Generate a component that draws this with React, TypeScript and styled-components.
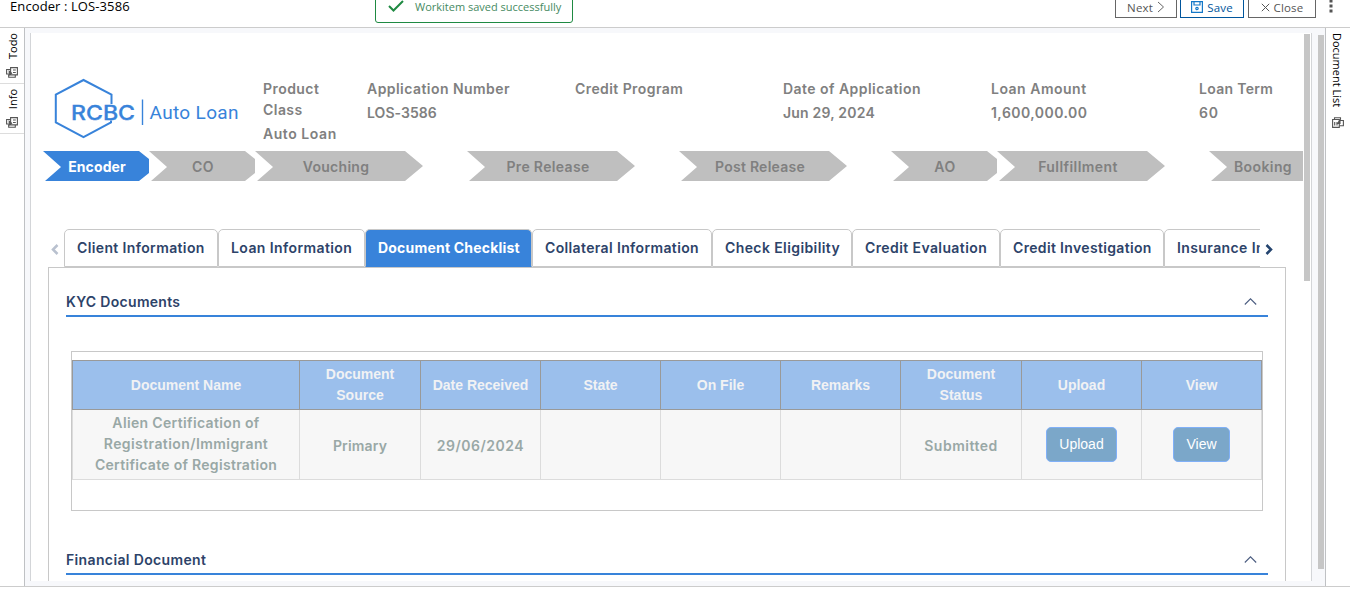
import React from "react";
import styled, { createGlobalStyle } from "styled-components";

const gotham = `Inter, "Open Sans", sans-serif`;
const arial = `"Liberation Sans", Arial, sans-serif`;

const Global = createGlobalStyle`
  * { box-sizing: border-box; }
  html, body { margin: 0; padding: 0; background: #fff; overflow: hidden; }
  body { font-family: "Open Sans", sans-serif; font-size: 13px; color: #000; }
`;

const Shell = styled.div`
  width: 1350px;
  height: 602px;
  display: flex;
  flex-direction: column;
  overflow: hidden;
`;
const TopBar = styled.header`
  position: relative;
  flex: none;
  height: 28px;
  border-bottom: 1px solid #ccc;
  display: flex;
  justify-content: space-between;
  align-items: flex-start;
  padding: 0 16px 0 10px;
`;
const Title = styled.div`
  line-height: 13px;
  font-size: 13px;
  letter-spacing: 0.1px;
`;
const Toast = styled.div`
  position: absolute;
  left: 375px;
  top: -12px;
  width: 198px;
  height: 35px;
  border: 1px solid #1f8a42;
  border-radius: 3px;
  display: flex;
  align-items: center;
  gap: 11px;
  padding: 1px 0 0 12px;
  color: #468a62;
  font-size: 11px;
  white-space: nowrap;
`;
const Actions = styled.div`
  display: flex;
  height: 18px;
  margin-top: -6px;
`;
const ActionButton = styled.button<{ $w: number; $gap: number; $primary?: boolean }>`
  width: ${(p) => p.$w}px;
  height: 24px;
  margin-right: ${(p) => p.$gap}px;
  padding: 2px 0 0;
  display: flex;
  align-items: center;
  justify-content: center;
  gap: 4px;
  background: #fff;
  border: 1px solid ${(p) => (p.$primary ? "#00559c" : "#666")};
  color: ${(p) => (p.$primary ? "#00559c" : "#555")};
  font: 11.5px "Open Sans", sans-serif;
  letter-spacing: 0.15px;
  white-space: nowrap;
`;
const Middle = styled.div`
  flex: none;
  height: 559px;
  display: flex;
  border-bottom: 1px solid #ccc;
`;
const Rail = styled.nav<{ $right?: boolean }>`
  flex: none;
  width: 25px;
  background: #fff;
  border-${(p) => (p.$right ? "left" : "right")}: 1px solid #bfc1c4;
`;
const RailItem = styled.div<{ $h: number; $right?: boolean }>`
  height: ${(p) => p.$h}px;
  border-bottom: ${(p) => (p.$right ? 0 : 1)}px solid #ddd;
  display: flex;
  flex-direction: column;
  align-items: center;
  justify-content: space-between;
  padding: 5px 0 5px;
`;
const RailText = styled.span<{ $up?: boolean }>`
  writing-mode: vertical-rl;
  transform: ${(p) => (p.$up ? "rotate(180deg)" : "none")};
  margin: ${(p) => (p.$up ? "0 0 0 1px" : "0 2px 0 0")};
  font-size: 11px;
  line-height: 16px;
  white-space: nowrap;
`;
const Canvas = styled.main`
  flex: 1;
  min-width: 0;
  background: #f7f8fb;
  display: flex;
  padding: 5px 0 5px 5px;
`;
const Panel = styled.section`
  width: 1282px;
  height: 548px;
  background: #fff;
  border: 1px solid #d3d5d8;
  border-width: 0 1px;
  overflow: hidden;
  display: flex;
`;
const Content = styled.div`
  width: 1272px;
  overflow: hidden;
`;
const Thumb = styled.div<{ $h: number; $top: number; $left: number }>`
  flex: none;
  width: 6px;
  height: ${(p) => p.$h}px;
  margin: ${(p) => p.$top}px 0 0 ${(p) => p.$left}px;
  background: #c6c6c6;
`;

const Summary = styled.div`
  display: flex;
  height: 118px;
  padding: 45px 0 0 23px;
`;
const LogoBox = styled.div`
  width: 209px;
  flex: none;
`;
const Field = styled.div<{ $w: number }>`
  flex: none;
  width: ${(p) => p.$w}px;
  font: 600 14px/21px ${gotham};
  color: #808080;
`;
const FieldLabel = styled.div<{ $ls: number; $narrow?: boolean }>`
  letter-spacing: ${(p) => p.$ls}px;
  width: ${(p) => (p.$narrow ? "60px" : "auto")};
  margin-bottom: 3px;
`;
const FieldValue = styled.div<{ $ls: number }>`
  letter-spacing: ${(p) => p.$ls}px;
`;

const Steps = styled.div`
  display: flex;
  padding-left: 12px;
  height: 78px;
`;
const StepSlot = styled.div<{ $w: number }>`
  flex: none;
  width: ${(p) => p.$w}px;
`;
const Step = styled.div<{ $long?: boolean; $active?: boolean; $ls: number }>`
  height: 30px;
  width: ${(p) => (p.$long ? 168 : 106)}px;
  padding: 1px ${(p) => (p.$long ? 6 : 0)}px 0 ${(p) => (p.$long ? 0 : 2)}px;
  clip-path: ${(p) =>
    p.$long
      ? "polygon(0 0, 150px 0, 168px 15px, 150px 30px, 2px 30px, 18px 16px)"
      : "polygon(0 0, 96px 0, 106px 8px, 106px 22px, 96px 30px, 2px 30px, 18px 16px)"};
  background: ${(p) => (p.$active ? "#3883da" : "#bfbfbf")};
  color: ${(p) => (p.$active ? "#fff" : "#808080")};
  font: ${(p) => (p.$active ? 700 : 600)} 14px/30px ${gotham};
  letter-spacing: ${(p) => p.$ls}px;
  text-align: center;
`;

const TabRow = styled.div`
  display: flex;
  height: 38px;
  padding-left: 20px;
`;
const Arrow = styled.div<{ $w: number; $pad?: number }>`
  width: ${(p) => p.$w}px;
  padding: 15px 0 0 ${(p) => p.$pad ?? 0}px;
  flex: none;
  line-height: 0;
`;
const TabStrip = styled.div`
  width: 1196px;
  overflow: hidden;
  display: flex;
`;
const Tab = styled.div<{ $w: number; $active?: boolean; $ls: number }>`
  flex: none;
  width: ${(p) => p.$w}px;
  height: 38px;
  border: 1px solid #c8c8c8;
  border-bottom-color: ${(p) => (p.$active ? "#3883da" : "#c8c8c8")};
  border-radius: 5px 5px 0 0;
  background: ${(p) => (p.$active ? "#3883da" : "#fff")};
  color: ${(p) => (p.$active ? "#fff" : "#2d4369")};
  font: ${(p) => (p.$active ? 700 : 600)} 14px/36px ${gotham};
  letter-spacing: ${(p) => p.$ls}px;
  padding-left: 12px;
  white-space: nowrap;
`;
const TabBody = styled.div`
  margin-left: 17px;
  width: 1238px;
  height: 400px;
  border: 1px solid #c8c8c8;
  padding: 19px 17px 0;
`;
const SectionHead = styled.div<{ $ls: number }>`
  height: 30px;
  border-bottom: 2px solid #3883da;
  display: flex;
  justify-content: space-between;
  padding: 0 11px 0 0;
  font: 600 14px/30px ${gotham};
  color: #2d4369;
  letter-spacing: ${(p) => p.$ls}px;
  svg { margin-top: 11px; }
`;
const TableBox = styled.div`
  margin: 34px 5px 34px;
  height: 160px;
  border: 1px solid #c8c8c8;
  padding-top: 8px;
`;
const Row = styled.div<{ $head?: boolean }>`
  display: grid;
  grid-template-columns: 228px 121px 120px 120px 120px 120px 121px 120px 120px;
  height: ${(p) => (p.$head ? 50 : 70)}px;
  background: ${(p) => (p.$head ? "#9bbfec" : "#f7f7f7")};
  border: 0 solid ${(p) => (p.$head ? "#999" : "#dcdcdc")};
  border-width: ${(p) => (p.$head ? 1 : 0)}px 0 1px;
`;
const HeadCell = styled.div`
  display: flex;
  align-items: center;
  justify-content: center;
  text-align: center;
  padding: 0 9px;
  border-right: 1px solid #999;
  color: #f1f2f4;
  font: 700 14px/21px ${arial};
  &:first-child { border-left: 1px solid #999; }
`;
const BodyCell = styled.div<{ $ls?: number }>`
  display: flex;
  flex-direction: column;
  align-items: center;
  justify-content: center;
  text-align: center;
  border-right: 1px solid #dcdcdc;
  color: #99a8a6;
  font: 600 14px/21px ${gotham};
  letter-spacing: ${(p) => p.$ls ?? 0}px;
  padding-top: 2px;
  &:first-child { border-left: 1px solid #dcdcdc; padding: 0 0 2px; }
`;
const NameLine = styled.span<{ $ls: number }>`
  letter-spacing: ${(p) => p.$ls}px;
`;
const CellButton = styled.button<{ $w: number }>`
  width: ${(p) => p.$w}px;
  height: 35px;
  margin-top: -2px;
  padding: 0;
  border: 1px solid #80b0f8;
  border-radius: 5px;
  background: #7ba7c9;
  color: #fff;
  font: 14px/33px ${arial};
`;

const Logo = () => (
  <svg width="190" height="62" viewBox="0 0 190 62">
    <g fill="none" stroke="#3883da" strokeWidth="2">
      <path d="M57.500 26V16.500L29.500 2 1.800 16.500V44.500L29.500 59.200 57 44.500V42.500" />
      <path d="M88.500 21.500v25.500" strokeWidth="1.400" />
    </g>
    <text x="17" y="41.500" fontFamily={gotham} fontSize="19.500" fontWeight="500" fill="#3883da" stroke="#3883da" strokeWidth=".3" textLength="64" lengthAdjust="spacingAndGlyphs">RCBC</text>
    <text x="95.500" y="41" fontFamily="Roboto, sans-serif" fontSize="19" fill="#3883da" textLength="89">Auto Loan</text>
  </svg>
);
const PanelIcon = ({ flip }: { flip?: boolean }) => (
  <svg width="12" height="11" viewBox="0 0 12 11" fill="none" stroke="#555" strokeWidth="1.100" transform={flip ? "translate(0 0)" : undefined}>
    {flip ? (
      <>
        <path d="M.600 2.500h6.700v7.900H.600z M2.700 5v3.500M5 5v3.500" />
        <path d="M2.500 2.300V.700h6v2M8 3.500h3.400v5.300H7.500" />
        <path d="M5.500 6.500 8 3v3.500z" fill="#555" />
      </>
    ) : (
      <>
        <path d="M4.600 .600h6.800v7.300H4.600z M7 3h2.800M7 5.500h2.800" />
        <path d="M4.500 2.500H.600v4.500h2M2.700 7.500v2.800h6.600V8" />
        <path d="M3.200 4.200v4l2.400-2z" fill="#555" />
      </>
    )}
  </svg>
);
const Collapse = () => (
  <svg width="13" height="8" viewBox="0 0 13 8" fill="none" stroke="#4b5d80" strokeWidth="1.100">
    <path d="M.800 6.500 6.500 .800 12.200 6.500" />
  </svg>
);
const Chevron = ({ right }: { right?: boolean }) => (
  <svg width="8" height="11" viewBox="0 0 8 11" fill="none" stroke={right ? "#24446f" : "#b9c1cf"} strokeWidth="2.500">
    <path d={right ? "M1.500 1 6 5.500 1.500 10" : "M6.500 1 2 5.500 6.500 10"} />
  </svg>
);

const steps = [
  { name: "Encoder", active: true, ls: 0.1 },
  { name: "CO", ls: 0.5 },
  { name: "Vouching", long: true, ls: 0.3 },
  { name: "Pre Release", long: true, ls: 0.33 },
  { name: "Post Release", long: true, ls: 0.25 },
  { name: "AO", ls: 0.5 },
  { name: "Fullfillment", long: true, ls: 0.42 },
  { name: "Booking", ls: 0.4 },
];
const tabs = [
  { name: "Client Information", w: 154, ls: 0.37 },
  { name: "Loan Information", w: 147, ls: 0.4 },
  { name: "Document Checklist", w: 167, active: true, ls: 0.2 },
  { name: "Collateral Information", w: 180, ls: 0.36 },
  { name: "Check Eligibility", w: 140, ls: 0.4 },
  { name: "Credit Evaluation", w: 148, ls: 0.4 },
  { name: "Credit Investigation", w: 164, ls: 0.34 },
  { name: "Insurance Information", w: 180, ls: 0.4 },
];
const fields = [
  { label: "Product Class", value: "Auto Loan", w: 104, narrow: true, ls: 0.45, vls: 0.55 },
  { label: "Application Number", value: "LOS-3586", w: 208, ls: 0.45, vls: 0.05 },
  { label: "Credit Program", value: "", w: 208, ls: 0.42, vls: 0 },
  { label: "Date of Application", value: "Jun 29, 2024", w: 208, ls: 0.46, vls: 0.2 },
  { label: "Loan Amount", value: "1,600,000.00", w: 208, ls: 0.5, vls: 0.45 },
  { label: "Loan Term", value: "60", w: 100, ls: 0.3, vls: 0.7 },
];
const columns = ["Document Name", "Document Source", "Date Received", "State", "On File", "Remarks", "Document Status", "Upload", "View"];

export default function App() {
  return (
    <Shell>
      <Global />
      <TopBar>
        <Title>Encoder : LOS-3586</Title>
        <Toast>
          <svg width="16" height="12" viewBox="0 0 16 12" fill="none" stroke="#1f8a42" strokeWidth="2"><path d="M1 6l4.500 4.500L15 1" /></svg>
          Workitem saved successfully
        </Toast>
        <Actions>
          <ActionButton $w={62} $gap={3}>
            Next
            <svg width="8" height="12" viewBox="0 0 8 12" fill="none" stroke="#666"><path d="M1 1l5.500 5L1 11" /></svg>
          </ActionButton>
          <ActionButton $w={64} $gap={4} $primary>
            <svg width="12" height="12" viewBox="0 0 12 12" fill="none" stroke="#1478c8" strokeWidth="1.200"><path d="M.600.600h10.800v10.800H.600zM3 .600v3.400h6V.600" /><circle cx="6" cy="7.500" r="1.200" /></svg>
            Save
          </ActionButton>
          <ActionButton $w={68} $gap={12}>
            <svg width="9" height="9" viewBox="0 0 9 9" stroke="#555"><path d="M.800.800l7.400 7.400M8.200.800.800 8.200" /></svg>
            Close
          </ActionButton>
          <svg width="6" height="22" viewBox="0 0 6 22" fill="#555"><path d="M1.500 5.500h3v3h-3zM1.500 10.500h3v3h-3zM1.500 15.500h3v3h-3z" /></svg>
        </Actions>
      </TopBar>
      <Middle>
        <Rail>
          <RailItem $h={56}><RailText $up>Todo</RailText><PanelIcon /></RailItem>
          <RailItem $h={50}><RailText $up>Info</RailText><PanelIcon /></RailItem>
        </Rail>
        <Canvas>
          <Panel>
            <Content>
              <Summary>
                <LogoBox><Logo /></LogoBox>
                {fields.map((f) => (
                  <Field key={f.label} $w={f.w}>
                    <FieldLabel $narrow={f.narrow} $ls={f.ls}>{f.label}</FieldLabel>
                    <FieldValue $ls={f.vls}>{f.value}</FieldValue>
                  </Field>
                ))}
              </Summary>
              <Steps>
                {steps.map((s) => (
                  <StepSlot key={s.name} $w={s.long ? 212 : 106}>
                    <Step $long={s.long} $active={s.active} $ls={s.ls}>{s.name}</Step>
                  </StepSlot>
                ))}
              </Steps>
              <TabRow>
                <Arrow $w={13}><Chevron /></Arrow>
                <TabStrip>
                  {tabs.map((t) => (
                    <Tab key={t.name} $w={t.w} $active={t.active} $ls={t.ls}>{t.name}</Tab>
                  ))}
                </TabStrip>
                <Arrow $w={14} $pad={5}><Chevron right /></Arrow>
              </TabRow>
              <TabBody>
                <SectionHead $ls={0.3}>KYC Documents<Collapse /></SectionHead>
                <TableBox>
                  <Row $head>
                    {columns.map((c) => <HeadCell key={c}>{c}</HeadCell>)}
                  </Row>
                  <Row>
                    <BodyCell>
                      <NameLine $ls={0.35}>Alien Certification of</NameLine>
                      <NameLine $ls={0.42}>Registration/Immigrant</NameLine>
                      <NameLine $ls={0.3}>Certificate of Registration</NameLine>
                    </BodyCell>
                    <BodyCell $ls={0.15}>Primary</BodyCell>
                    <BodyCell $ls={0.5}>29/06/2024</BodyCell>
                    <BodyCell />
                    <BodyCell />
                    <BodyCell />
                    <BodyCell $ls={0.5}>Submitted</BodyCell>
                    <BodyCell><CellButton $w={71}>Upload</CellButton></BodyCell>
                    <BodyCell><CellButton $w={57}>View</CellButton></BodyCell>
                  </Row>
                </TableBox>
                <SectionHead $ls={0.36}>Financial Document<Collapse /></SectionHead>
              </TabBody>
            </Content>
            <Thumb $h={247} $top={1} $left={1} />
          </Panel>
          <Thumb $h={534} $top={2} $left={6} />
        </Canvas>
        <Rail $right>
          <RailItem $h={105} $right><RailText>Document List</RailText><PanelIcon flip /></RailItem>
        </Rail>
      </Middle>
    </Shell>
  );
}
